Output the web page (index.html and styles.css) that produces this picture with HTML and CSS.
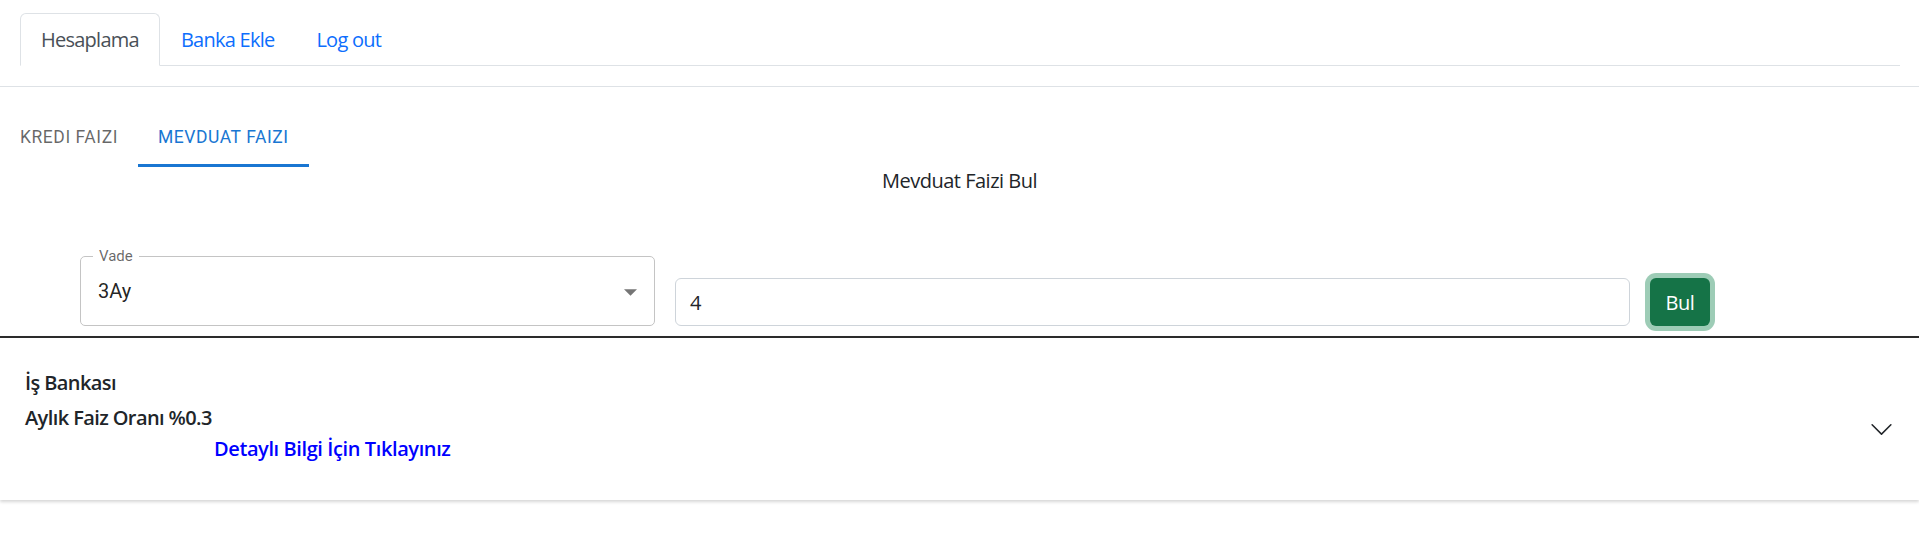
FILE: index.html
```html
<!DOCTYPE html>
<html lang="tr">
<head>
<meta charset="utf-8">
<title>Hesaplama</title>
<link rel="stylesheet" href="styles.css">
</head>
<body>
<header class="top">
  <ul class="nav-tabs">
    <li class="nav-tab active">Hesaplama</li>
    <li class="nav-tab">Banka Ekle</li>
    <li class="nav-tab">Log out</li>
  </ul>
</header>
<main>
  <div class="mui-tabs">
    <div class="mui-tab">KREDI FAIZI</div>
    <div class="mui-tab selected">MEVDUAT FAIZI</div>
  </div>
  <h2 class="title">Mevduat Faizi Bul</h2>
  <div class="form-row">
    <fieldset class="select">
      <legend>Vade</legend>
      <div class="select-value">
        <span>3Ay</span>
        <svg class="drop" width="13" height="7" viewBox="0 0 10 5"><path d="M0 0l5 5 5-5z" fill="rgba(0,0,0,0.54)"/></svg>
      </div>
    </fieldset>
    <div class="input">4</div>
    <button class="btn">Bul</button>
  </div>
  <section class="accordion">
    <div class="acc-button">
      <div class="acc-content">
        <div class="line first">İş Bankası</div>
        <div class="line second">Aylık Faiz Oranı %0.3</div>
        <a class="link">Detaylı Bilgi İçin Tıklayınız</a>
      </div>
      <svg class="chevron" width="25" height="25" viewBox="0 0 16 16"><path fill="#212529" fill-rule="evenodd" d="M1.646 4.646a.5.5 0 0 1 .708 0L8 10.293l5.646-5.647a.5.5 0 0 1 .708.708l-6 6a.5.5 0 0 1-.708 0l-6-6a.5.5 0 0 1 0-.708z"/></svg>
    </div>
  </section>
</main>
</body>
</html>
```
FILE: styles.css
```css
* { box-sizing: border-box; }
html, body { margin: 0; padding: 0; background: #fff; }
body {
  font-family: "Open Sans", "Noto Sans", sans-serif;
  color: #212529;
  font-size: 20px;
  width: 1919px;
  height: 552px;
  overflow: hidden;
}
.top {
  padding: 13px 19px 20px 20px;
  border-bottom: 1px solid #dee2e6;
}
.nav-tabs {
  list-style: none;
  margin: 0;
  padding: 0;
  display: flex;
  border-bottom: 1px solid #dee2e6;
}
.nav-tab {
  padding: 10px 20px;
  line-height: 31px;
  border: 1px solid transparent;
  border-radius: 6px 6px 0 0;
  margin-bottom: -1px;
  color: #0d6efd;
  letter-spacing: -0.75px;
}
.nav-tab.active {
  color: #495057;
  border-color: #dee2e6 #dee2e6 #fff;
  background: #fff;
}
.mui-tabs {
  display: flex;
  margin-top: 20px;
  height: 60px;
}
.mui-tab {
  font-family: Roboto, "Noto Sans", sans-serif;
  font-weight: 400;
  font-size: 17.5px;
  letter-spacing: 0.55px;
  color: rgba(0,0,0,0.6);
  padding: 0 20px;
  display: flex;
  align-items: center;
  border-bottom: 3px solid transparent;
  padding-top: 3px;
}
.mui-tab.selected {
  color: #1976d2;
  border-bottom-color: #1976d2;
}
.title {
  margin: -1px 0 0;
  font-size: 20px;
  font-weight: 400;
  line-height: 30px;
  text-align: center;
  letter-spacing: -0.5px;
}
.form-row {
  display: flex;
  align-items: flex-end;
  gap: 20px;
  padding-left: 80px;
  margin-top: 53px;
  margin-bottom: 10px;
}
.select {
  width: 575px;
  margin: 0;
  padding: 0 12px 7px;
  border: 1px solid #c4c4c4;
  border-radius: 5px;
}
.select legend {
  padding: 0 6px;
  font-family: Roboto, sans-serif;
  font-size: 15px;
  line-height: 15px;
  color: rgba(0,0,0,0.6);
}
.select-value {
  height: 54px;
  display: flex;
  align-items: center;
  justify-content: space-between;
  padding-left: 5px;
  font-family: Roboto, sans-serif;
  font-size: 20px;
  color: rgba(0,0,0,0.87);
}
.drop { margin-right: 5px; margin-top: 2px; }
.input {
  width: 955px;
  height: 48px;
  border: 1px solid #ced4da;
  border-radius: 6px;
  padding: 0 14px;
  display: flex;
  align-items: center;
  font-size: 20px;
  color: #212529;
}
.btn {
  width: 60px;
  height: 48px;
  border: none;
  border-radius: 6px;
  background: #157347;
  color: #fff;
  font-family: "Open Sans", sans-serif;
  font-size: 20px;
  letter-spacing: -0.45px;
  box-shadow: 0 0 0 5px rgba(60,153,110,0.5);
  padding: 0;
}
.accordion {
  border-top: 2px solid #2b2b2b;
  box-shadow: 0 2px 3px rgba(0,0,0,0.16);
}
.acc-button {
  display: flex;
  align-items: center;
  padding: 33px 25px 39px;
}
.acc-content { font-weight: 600; letter-spacing: -0.6px; }
.line { line-height: 24px; }
.line.first { margin-bottom: 11px; }
.line.second { margin-bottom: 7px; }
.link {
  display: block;
  line-height: 24px;
  margin-left: 189px;
  color: #0000ff;
  letter-spacing: -0.4px;
  cursor: pointer;
}
.chevron { margin-left: auto; margin-top: 26px; }
```
